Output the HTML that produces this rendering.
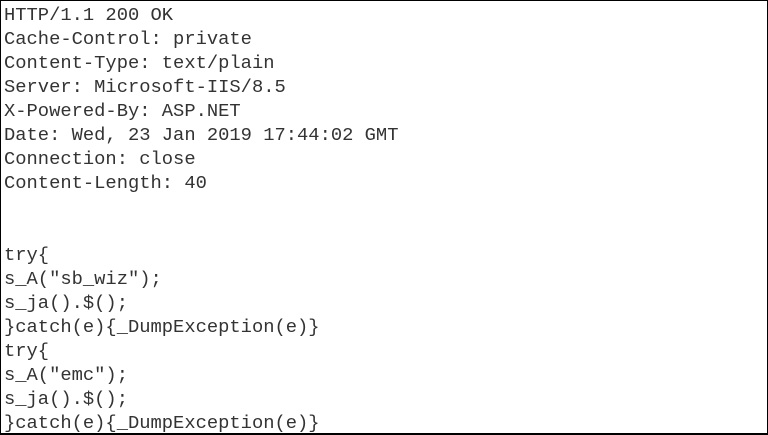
<!DOCTYPE html>
<html><head><meta charset="utf-8"><style>
html,body{margin:0;padding:0;background:#fff;}
.box{position:absolute;left:0;top:0;width:766px;height:432px;border:1px solid #000;border-bottom-width:2px;background:#fff;overflow:hidden;}
pre{margin:0;position:absolute;left:3px;top:2px;font-family:"Liberation Mono",monospace;font-size:18.8px;line-height:24px;color:#333;}
</style></head><body><div class="box"><pre>HTTP/1.1 200 OK
Cache-Control: private
Content-Type: text/plain
Server: Microsoft-IIS/8.5
X-Powered-By: ASP.NET
Date: Wed, 23 Jan 2019 17:44:02 GMT
Connection: close
Content-Length: 40


try{
s_A("sb_wiz");
s_ja().$();
}catch(e){_DumpException(e)}
try{
s_A("emc");
s_ja().$();
}catch(e){_DumpException(e)}</pre></div></body></html>
